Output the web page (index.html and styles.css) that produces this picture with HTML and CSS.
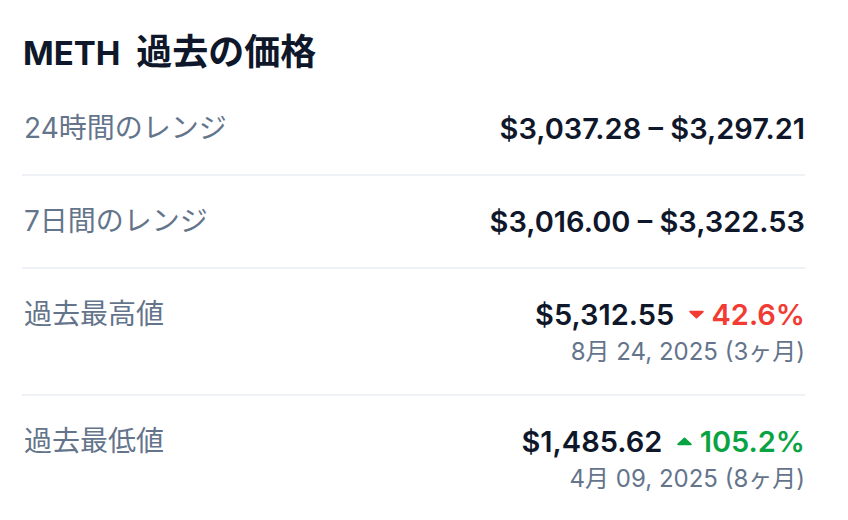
FILE: index.html
```html
<!DOCTYPE html>
<html lang="ja">
<head>
<meta charset="utf-8">
<link rel="stylesheet" href="styles.css">
</head>
<body>
<section class="card">
  <h2 class="title">METH <span class="title-ja">過去の価格</span></h2>
  <div class="row">
    <div class="label">24時間のレンジ</div>
    <div class="right"><div class="value">$3,037.28 – $3,297.21</div></div>
  </div>
  <div class="row">
    <div class="label">7日間のレンジ</div>
    <div class="right"><div class="value">$3,016.00 – $3,322.53</div></div>
  </div>
  <div class="row">
    <div class="label">過去最高値</div>
    <div class="right">
      <div class="value">$5,312.55 <span class="change down"><svg class="tri" viewBox="0 0 14 8" width="15" height="9"><path d="M1 0.5h12a0.8 0.8 0 0 1 .6 1.3L7.6 7.4a0.8 0.8 0 0 1-1.2 0L.4 1.8A.8.8 0 0 1 1 .5z" fill="currentColor"/></svg>42.6%</span></div>
      <div class="date">8月 24, 2025 (3ヶ月)</div>
    </div>
  </div>
  <div class="row">
    <div class="label">過去最低値</div>
    <div class="right">
      <div class="value">$1,485.62 <span class="change up"><svg class="tri" viewBox="0 0 14 8" width="15" height="9"><path d="M1 7.5h12a0.8 0.8 0 0 0 .6-1.3L7.6 .6a0.8 0.8 0 0 0-1.2 0L.4 6.2A.8.8 0 0 0 1 7.5z" fill="currentColor"/></svg>105.2%</span></div>
      <div class="date">4月 09, 2025 (8ヶ月)</div>
    </div>
  </div>
</section>
</body>
</html>
```
FILE: styles.css
```css
html, body {
  margin: 0;
  padding: 0;
  background: #ffffff;
}
body {
  font-family: Inter, "Noto Sans CJK JP", sans-serif;
  color: #0f172a;
}
.card {
  width: 783px;
  padding: 0 0 0 22px;
}
.title {
  margin: 0;
  padding: 32px 0 10px 1px;
  font-size: 33px;
  line-height: 40px;
  font-weight: 700;
  color: #0f172a;
}
.title-ja {
  font-size: 36px;
  margin-left: 8px;
}
.row {
  display: flex;
  justify-content: space-between;
  align-items: flex-start;
  padding: 27px 0 27px 2px;
  border-bottom: 2px solid #eef2f6;
}
.label {
  font-size: 28px;
  line-height: 37px;
  color: #64748b;
}
.right {
  display: flex;
  flex-direction: column;
  align-items: flex-end;
}
.value {
  font-size: 29px;
  line-height: 37px;
  font-weight: 600;
  color: #0f172a;
  display: flex;
  align-items: center;
  white-space: pre;
}
.change {
  display: inline-flex;
  align-items: center;
  margin-left: 7px;
  gap: 8px;
  font-weight: 600;
}
.change.down { color: #f23b32; }
.change.up { color: #0aa343; }
.tri { display: block; }
.date {
  margin-top: 4px;
  font-size: 24px;
  line-height: 30px;
  color: #64748b;
}
```
